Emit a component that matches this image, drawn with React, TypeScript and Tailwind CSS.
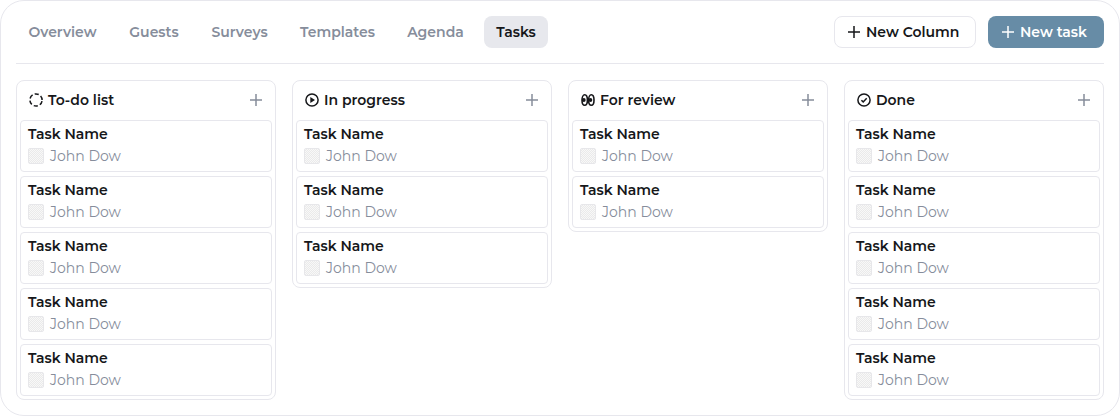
import type { ReactNode } from "react";

type Task = { name: string; owner: string };
type Column = { title: string; icon: ReactNode; tasks: Task[] };

const makeTasks = (count: number): Task[] =>
  Array.from({ length: count }, () => ({ name: "Task Name", owner: "John Dow" }));

const tabs = [
  { label: "Overview", width: "w-[93px]" },
  { label: "Guests", width: "w-[74px]" },
  { label: "Surveys", width: "w-[81px]" },
  { label: "Templates", width: "w-[99px]" },
  { label: "Agenda", width: "w-[81px]" },
  { label: "Tasks", width: "w-16" },
];

function Icon({ children }: { children: ReactNode }) {
  return (
    <svg
      viewBox="0 0 16 16"
      className="size-4 shrink-0"
      fill="none"
      stroke="currentColor"
      strokeWidth="1.5"
      aria-hidden="true"
    >
      {children}
    </svg>
  );
}

function PlusIcon() {
  return (
    <Icon>
      <path d="M8 2v12M2 8h12" />
    </Icon>
  );
}

const dashedCircle = (
  <Icon>
    <circle cx="8" cy="8" r="6.1" strokeDasharray="4.2 2.188" strokeDashoffset="-1.094" />
  </Icon>
);

const playCircle = (
  <Icon>
    <circle cx="8" cy="8" r="6.1" />
    <path d="M6.3 5v6L11 8z" fill="currentColor" stroke="none" />
  </Icon>
);

const eyes = (
  <Icon>
    <ellipse cx="4.7" cy="8" rx="2.7" ry="5.3" strokeWidth="1.6" />
    <ellipse cx="11.3" cy="8" rx="2.7" ry="5.3" strokeWidth="1.6" />
    <circle cx="3.8" cy="8" r="1.9" fill="currentColor" stroke="none" />
    <circle cx="10.4" cy="8" r="1.9" fill="currentColor" stroke="none" />
  </Icon>
);

const checkCircle = (
  <Icon>
    <circle cx="8" cy="8" r="6.1" />
    <path d="M5.4 8.2l1.8 1.7 3.5-3.6" />
  </Icon>
);

const columns: Column[] = [
  { title: "To-do list", icon: dashedCircle, tasks: makeTasks(5) },
  { title: "In progress", icon: playCircle, tasks: makeTasks(3) },
  { title: "For review", icon: eyes, tasks: makeTasks(2) },
  { title: "Done", icon: checkCircle, tasks: makeTasks(5) },
];

function TaskCard({ name, owner }: Task) {
  return (
    <li className="rounded border border-[#e7e7ed] px-[7px] pt-[3px] pb-[7px]">
      <h3 className="leading-5 font-semibold">{name}</h3>
      <div className="mt-1 flex h-4 items-center gap-1.5">
        <span className="size-4 rounded-xs border border-[#e7e7ea] bg-[repeating-conic-gradient(#eaeaea_0_25%,#f8f8f8_0_50%)] bg-[length:2px_2px]" />
        <span className="leading-4 text-[#868d9b]">{owner}</span>
      </div>
    </li>
  );
}

function BoardColumn({ title, icon, tasks }: Column) {
  return (
    <section className="rounded-lg border border-[#e7e7ed] px-[3px] pb-[3px]">
      <header className="flex items-center justify-between px-2 pt-[9px] pb-2.5">
        <h2 className="flex items-center gap-1 leading-5 font-semibold">
          {icon}
          {title}
        </h2>
        <button type="button" aria-label={`Add task to ${title}`} className="text-[#868d9b]">
          <PlusIcon />
        </button>
      </header>
      <ul className="flex flex-col gap-1">
        {tasks.map((task, i) => (
          <TaskCard key={i} {...task} />
        ))}
      </ul>
    </section>
  );
}

export default function App() {
  return (
    <main className="rounded-3xl border border-[#e7e7ed] bg-white p-[15px] font-[Montserrat,Inter,sans-serif] text-sm text-[#16171a]">
      <div className="flex items-center justify-between border-b border-[#e7e7ed] pb-[15px]">
        <nav className="flex gap-2">
          {tabs.map(({ label, width }) => (
            <a
              key={label}
              href="#"
              aria-current={label === "Tasks" ? "page" : undefined}
              className={`${width} flex h-8 items-center justify-center rounded-lg font-semibold ${
                label === "Tasks" ? "bg-[#e7e8ed]" : "text-[#868d9b]"
              }`}
            >
              {label}
            </a>
          ))}
        </nav>
        <div className="flex gap-3 font-semibold">
          <button type="button" className="flex h-8 w-[142px] items-center gap-1 rounded-lg border border-[#e7e7ed] pl-[11px]">
            <PlusIcon />
            New Column
          </button>
          <button type="button" className="flex h-8 w-[116px] items-center gap-1 rounded-lg bg-[#678ca6] pl-3 text-white">
            <PlusIcon />
            New task
          </button>
        </div>
      </div>
      <div className="mt-4 grid grid-cols-4 items-start gap-4">
        {columns.map((column) => (
          <BoardColumn key={column.title} {...column} />
        ))}
      </div>
    </main>
  );
}
